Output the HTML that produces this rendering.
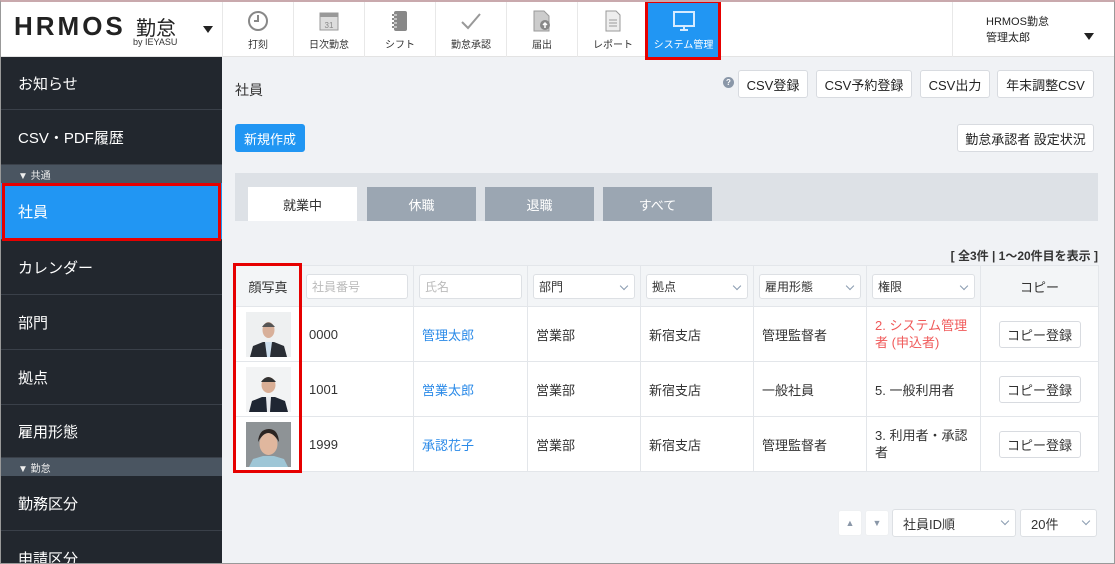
<!DOCTYPE html>
<html style="width:1115px;height:564px;overflow:hidden"><head><meta charset="utf-8"><style>
*{box-sizing:border-box;margin:0;padding:0}
body{width:1115px;height:564px;overflow:hidden;font-family:"Liberation Sans","Noto Sans CJK JP",sans-serif;background:#f0f2f5;position:relative;font-size:13px;color:#333}
.frame{position:absolute;left:0;top:0;width:1115px;height:564px;border:1px solid #999;border-top:2px solid #c9a9ad;pointer-events:none;z-index:10}
.hdr{position:absolute;left:0;top:0;width:1115px;height:57px;background:#fff;border-bottom:1px solid #e3e3e3}
.logo{position:absolute;left:14px;top:11px;font-size:26px;font-weight:bold;letter-spacing:3px;color:#222}
.logo span{font-size:20px;font-weight:normal;letter-spacing:0}
.by{position:absolute;left:133px;top:37px;font-size:9px;color:#333}
.caret{position:absolute;width:0;height:0;border-left:5px solid transparent;border-right:5px solid transparent;border-top:7px solid #222}
.nav{position:absolute;top:2px;height:55px;width:71px;border-left:1px solid #e8e8e8;text-align:center;font-size:10px;color:#333}
.nav .ic{height:32px;display:flex;align-items:center;justify-content:center;padding-top:6px}
.nav .t{margin-top:2px}
.side{position:absolute;left:0;top:57px;width:222px;height:507px;background:#22272e;color:#fff;overflow:hidden}
.si{height:55px;border-bottom:1px solid #3a4049;padding-left:18px;font-size:15px;display:flex;align-items:center}
.sec{height:18px;background:#4a5561;font-size:10px;padding-left:18px;display:flex;align-items:center;color:#eee}
.btn{position:absolute;background:#fff;border:1px solid #d8dbe0;border-radius:3px;font-size:13px;display:flex;align-items:center;justify-content:center;color:#222}
.tab{position:absolute;top:187px;height:34px;width:109px;display:flex;align-items:center;justify-content:center;font-size:13px;color:#fff;background:#9ba6b2}
table{position:absolute;left:235px;top:265px;border-collapse:collapse;background:#fff}
td{border:1px solid #e3e6ea;font-size:13px;padding:0 8px;vertical-align:middle}
tr.h td{background:#f3f5f7;height:41px;padding:0 5px}
tr.r td{height:55px}
.inp{height:25px;border:1px solid #dde0e4;border-radius:3px;background:#fff;font-size:12px;color:#bbb;display:flex;align-items:center;padding:0 5px;position:relative}
.sel{color:#333}
.sel:after{content:"";position:absolute;right:7px;top:8px;width:5px;height:5px;border-right:1.3px solid #8a9bb0;border-bottom:1.3px solid #8a9bb0;transform:rotate(45deg)}
.lnk{color:#2a8ae8}
.cp{width:82px;height:27px;border:1px solid #d8dbe0;border-radius:3px;margin:0 auto;display:flex;align-items:center;justify-content:center;font-size:13px}
.red{position:absolute;border:3px solid #e60000}
</style></head><body>
<div class="hdr">
 <div class="logo">HRMOS <span>勤怠</span></div>
 <div class="by">by IEYASU</div>
 <div class="caret" style="left:203px;top:26px"></div>
 <div class="nav" style="left:222px"><div class="ic"><svg width="22" height="22" viewBox="0 0 22 22"><circle cx="11" cy="11" r="9" fill="none" stroke="#888" stroke-width="2"/><path d="M11 5v6h-4" fill="none" stroke="#888" stroke-width="2"/></svg></div><div class="t">打刻</div></div>
 <div class="nav" style="left:293px"><div class="ic"><svg width="22" height="22" viewBox="0 0 22 22"><rect x="2" y="3" width="18" height="17" fill="#ddd" stroke="#999"/><rect x="2" y="3" width="18" height="4" fill="#999"/><text x="11" y="18" font-size="8" text-anchor="middle" fill="#888" font-family="Liberation Sans">31</text></svg></div><div class="t">日次勤怠</div></div>
 <div class="nav" style="left:364px"><div class="ic"><svg width="18" height="22" viewBox="0 0 18 22"><rect x="3" y="1" width="13" height="20" rx="2" fill="#888"/><path d="M1 5h5M1 9h5M1 13h5M1 17h5" stroke="#888" stroke-width="2"/><path d="M3 5h3M3 9h3M3 13h3M3 17h3" stroke="#fff" stroke-width="1"/></svg></div><div class="t">シフト</div></div>
 <div class="nav" style="left:435px"><div class="ic"><svg width="22" height="20" viewBox="0 0 22 20"><path d="M2 11l6 6L20 3" fill="none" stroke="#999" stroke-width="2"/></svg></div><div class="t">勤怠承認</div></div>
 <div class="nav" style="left:506px"><div class="ic"><svg width="20" height="22" viewBox="0 0 20 22"><path d="M2 1h10l5 5v15H2z" fill="#ccc" stroke="#999"/><circle cx="13" cy="15" r="5" fill="#888"/><path d="M13 18v-5M11 15l2-2 2 2" stroke="#fff" stroke-width="1.5" fill="none"/></svg></div><div class="t">届出</div></div>
 <div class="nav" style="left:577px"><div class="ic"><svg width="18" height="22" viewBox="0 0 18 22"><path d="M2 1h10l4 4v16H2z" fill="#eee" stroke="#999"/><path d="M5 10h8M5 13h8M5 16h8" stroke="#999"/></svg></div><div class="t">レポート</div></div>
 <div class="nav" style="left:647px;width:72px;background:#2196f3;color:#fff"><div class="ic"><svg width="24" height="22" viewBox="0 0 24 22"><rect x="2" y="2" width="20" height="14" fill="none" stroke="#d6ebff" stroke-width="2"/><path d="M8 20h8M12 16v4" stroke="#d6ebff" stroke-width="2"/></svg></div><div class="t">システム管理</div></div>
 <div class="red" style="left:645px;top:0;width:76px;height:60px"></div>
 <div style="position:absolute;left:952px;top:2px;height:55px;border-left:1px solid #e8e8e8;width:160px;padding:12px 0 0 33px;font-size:11px;line-height:16px;color:#222">HRMOS勤怠<br>管理太郎</div>
 <div class="caret" style="left:1084px;top:33px"></div>
</div>
<div class="side">
 <div class="si" style="height:53px">お知らせ</div><div class="si">CSV・PDF履歴</div>
 <div class="sec">▼ 共通</div>
 <div class="si" style="background:#2196f3;height:57px">社員</div>
 <div class="si">カレンダー</div><div class="si">部門</div><div class="si">拠点</div><div class="si" style="height:53px">雇用形態</div>
 <div class="sec">▼ 勤怠</div>
 <div class="si">勤務区分</div><div class="si">申請区分</div>
</div>
<div class="red" style="left:2px;top:183px;width:219px;height:58px"></div>
<div style="position:absolute;left:235px;top:80px;font-size:14px">社員</div>
<div style="position:absolute;left:723px;top:77px;width:11px;height:11px;border-radius:50%;background:#8a97a8;color:#fff;font-size:8px;font-weight:bold;text-align:center;line-height:11px">?</div>
<div class="btn" style="left:738px;top:70px;width:70px;height:28px">CSV登録</div>
<div class="btn" style="left:816px;top:70px;width:96px;height:28px">CSV予約登録</div>
<div class="btn" style="left:920px;top:70px;width:70px;height:28px">CSV出力</div>
<div class="btn" style="left:997px;top:70px;width:97px;height:28px">年末調整CSV</div>
<div class="btn" style="left:235px;top:124px;width:70px;height:28px;background:#2196f3;border-color:#2196f3;color:#fff">新規作成</div>
<div class="btn" style="left:957px;top:124px;width:137px;height:28px">勤怠承認者 設定状況</div>
<div style="position:absolute;left:235px;top:173px;width:863px;height:48px;background:#dde1e6"></div>
<div class="tab" style="left:248px;background:#fff;color:#333">就業中</div>
<div class="tab" style="left:367px">休職</div>
<div class="tab" style="left:485px">退職</div>
<div class="tab" style="left:603px">すべて</div>
<div style="position:absolute;right:17px;top:247px;font-size:12px;font-weight:bold;color:#333">[ 全3件 | 1〜20件目を表示 ]</div>
<table>
<colgroup><col style="width:65px"><col style="width:113px"><col style="width:114px"><col style="width:113px"><col style="width:113px"><col style="width:113px"><col style="width:114px"><col style="width:118px"></colgroup>
<tr class="h"><td style="text-align:center">顔写真</td><td><div class="inp">社員番号</div></td><td><div class="inp">氏名</div></td><td><div class="inp sel">部門</div></td><td><div class="inp sel">拠点</div></td><td><div class="inp sel">雇用形態</div></td><td><div class="inp sel">権限</div></td><td style="text-align:center">コピー</td></tr>
<tr class="r"><td><svg width="45" height="45" viewBox="0 0 45 45" style="display:block;margin:auto"><rect width="45" height="45" fill="#eef0f1"/><path d="M4 45l3-11 10-4h11l10 4 3 11z" fill="#2a2e35"/><path d="M19 30h7l-2 15h-3z" fill="#cfe0ee"/><ellipse cx="22.5" cy="18" rx="6" ry="8" fill="#d8b09a"/><path d="M16 15q6-9 13 0" fill="#555"/></svg></td><td>0000</td><td class="lnk">管理太郎</td><td>営業部</td><td>新宿支店</td><td>管理監督者</td><td style="color:#f05a5a;line-height:17px">2. システム管理者 (申込者)</td><td><div class="cp">コピー登録</div></td></tr>
<tr class="r"><td><svg width="45" height="45" viewBox="0 0 45 45" style="display:block;margin:auto"><rect width="45" height="45" fill="#f2f3f4"/><path d="M3 45l3-11 10-4h13l10 4 3 11z" fill="#1f2633"/><path d="M20 30h5l-1 15h-3z" fill="#e8eaee"/><ellipse cx="22.5" cy="18" rx="7" ry="8" fill="#d9ae95"/><path d="M15 15q7-10 15 0" fill="#333"/></svg></td><td>1001</td><td class="lnk">営業太郎</td><td>営業部</td><td>新宿支店</td><td>一般社員</td><td>5. 一般利用者</td><td><div class="cp">コピー登録</div></td></tr>
<tr class="r"><td><svg width="45" height="45" viewBox="0 0 45 45" style="display:block;margin:auto"><rect width="45" height="45" fill="#8e9396"/><path d="M3 45l4-8 10-3h11l10 3 4 8z" fill="#9ec6d6"/><ellipse cx="22.5" cy="22" rx="9" ry="11" fill="#e0b79e"/><path d="M12 20q10-18 21 0q-1-13-10-13q-10 0-11 13" fill="#2b2421"/></svg></td><td>1999</td><td class="lnk">承認花子</td><td>営業部</td><td>新宿支店</td><td>管理監督者</td><td style="line-height:17px">3. 利用者・承認者</td><td><div class="cp">コピー登録</div></td></tr>
</table>
<div class="red" style="left:233px;top:263px;width:69px;height:210px"></div>
<div class="btn" style="left:838px;top:510px;width:24px;height:26px;border-color:#eef0f2;font-size:9px;color:#8a97a8">▲</div>
<div class="btn" style="left:865px;top:510px;width:24px;height:26px;border-color:#eef0f2;font-size:9px;color:#8a97a8">▼</div>
<div class="inp sel" style="position:absolute;left:892px;top:509px;width:124px;height:28px;font-size:13px;padding-left:10px">社員ID順</div>
<div class="inp sel" style="position:absolute;left:1020px;top:509px;width:77px;height:28px;font-size:13px;padding-left:10px">20件</div>
<div class="frame"></div>
</body></html>
